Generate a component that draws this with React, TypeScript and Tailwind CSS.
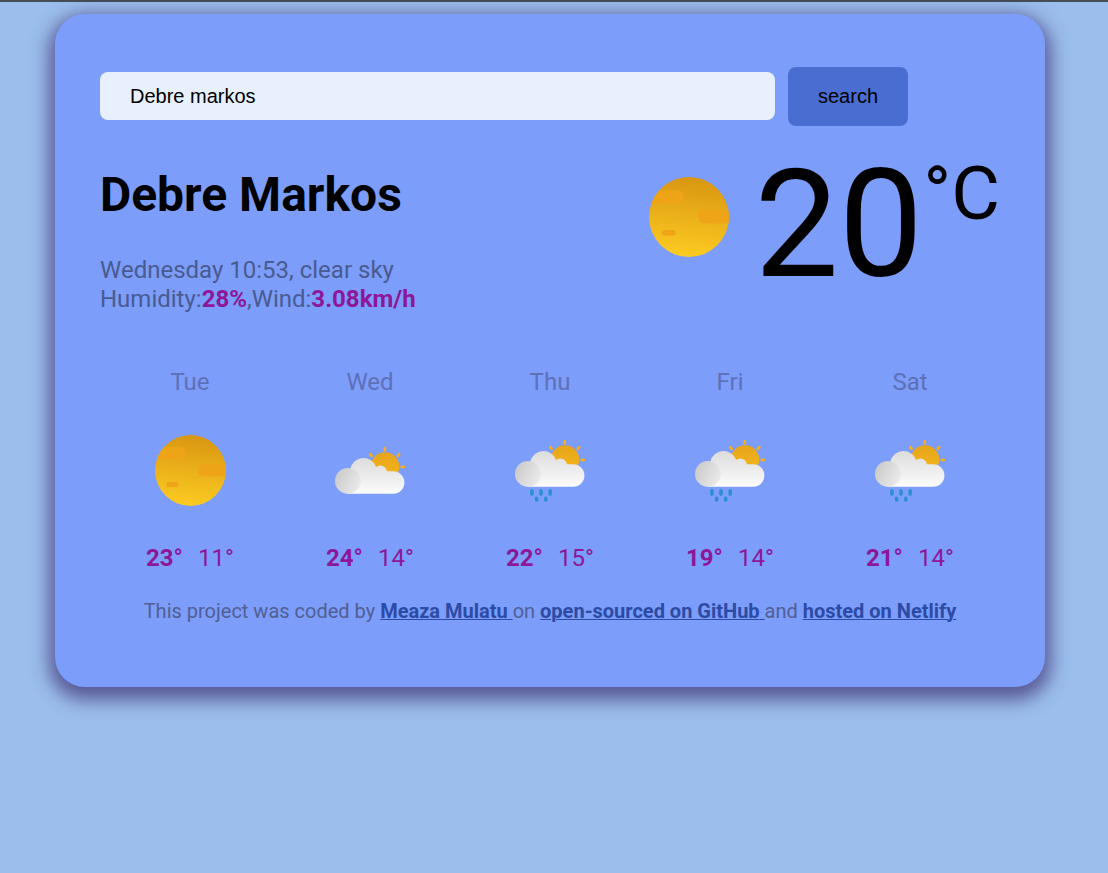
import { useState } from "react";

type Kind = "sun" | "cloud" | "rain";

function SunIcon({ className }: { className: string }) {
  return (
    <svg viewBox="0 0 80 80" className={className} role="img" aria-label="clear sky">
      <defs>
        <linearGradient id="disc" x1="0.55" y1="0" x2="0.45" y2="1">
          <stop offset="0" stopColor="#d89611" />
          <stop offset="1" stopColor="#fdcb22" />
        </linearGradient>
        <clipPath id="discClip">
          <circle cx="40" cy="40" r="40" />
        </clipPath>
      </defs>
      <circle cx="40" cy="40" r="40" fill="url(#disc)" />
      <g clipPath="url(#discClip)" fill="#efa317">
        <rect x="-10" y="13.500" width="44.500" height="13.500" rx="6" />
        <rect x="49" y="33" width="45" height="13.500" rx="6" />
        <rect x="13" y="53" width="13.500" height="5.500" rx="2.500" />
      </g>
    </svg>
  );
}

function CloudIcon({ rain }: { rain: boolean }) {
  const dy = rain ? 0 : 7;
  return (
    <svg
      viewBox="0 0 72 72"
      className="size-[72px]"
      role="img"
      aria-label={rain ? "rain" : "few clouds"}
    >
      <defs>
        <linearGradient id="cloudBody" x1="0" y1="0" x2="0" y2="1">
          <stop offset="0" stopColor="#dcdcdc" />
          <stop offset="1" stopColor="#fcfcfc" />
        </linearGradient>
        <linearGradient id="cloudPuff" x1="0" y1="0.2" x2="1" y2="0.7">
          <stop offset="0" stopColor="#c9c9c9" />
          <stop offset="1" stopColor="#ebebeb" />
        </linearGradient>
        <linearGradient id="smallSun" x1="0" y1="0" x2="0" y2="1">
          <stop offset="0" stopColor="#e6a41b" />
          <stop offset="1" stopColor="#f6b91d" />
        </linearGradient>
      </defs>
      <g transform={`translate(0.6 ${dy})`}>
        <g stroke="#f9ae16" strokeWidth="2.700" strokeLinecap="round">
          <path d="M50.200 7.400v2M35.600 13.200l1.400 1.600M64.600 13.200l-1.400 1.600M67.200 25.900h2" />
        </g>
        <circle cx="50.400" cy="25.600" r="14.300" fill="url(#smallSun)" />
        <path
          d="M13.300 52.800A12.800 12.800 0 0 1 15.800 27.800A13.400 13.400 0 0 1 41.600 26A6.500 6.500 0 0 1 52.200 30.300H58.600A11.250 11.250 0 0 1 58.600 52.800Z"
          fill="url(#cloudBody)"
        />
        <circle cx="13.300" cy="39.900" r="12.900" fill="url(#cloudPuff)" />
        {rain && (
          <g stroke="#2b8fd0" strokeWidth="3.600" strokeLinecap="round">
            <path d="M17.300 56.900v3.200M26.400 56.900v3.200M35.600 56.900v3.200M22 64.400v1.500M31.100 64.400v1.500" />
          </g>
        )}
      </g>
    </svg>
  );
}

const forecast: { day: string; icon: Kind; max: number; min: number }[] = [
  { day: "Tue", icon: "sun", max: 23, min: 11 },
  { day: "Wed", icon: "cloud", max: 24, min: 14 },
  { day: "Thu", icon: "rain", max: 22, min: 15 },
  { day: "Fri", icon: "rain", max: 19, min: 14 },
  { day: "Sat", icon: "rain", max: 21, min: 14 },
];

export default function App() {
  const [city, setCity] = useState("Debre markos");

  return (
    <div className="min-h-screen border-t-2 border-[#474c55] bg-[#9bbeed] pt-3 pr-[63px] pb-12 pl-[55px] font-['Roboto',sans-serif]">
      <main className="rounded-[30px] bg-[#7c9dfa] px-[45px] pt-[53px] pb-16 shadow-[0_7px_18px_6px_rgba(67,56,122,0.75)]">
        <form
          className="flex items-start gap-[13px] font-['Liberation_Sans',Arial,sans-serif] text-xl text-black"
          onSubmit={(e) => e.preventDefault()}
        >
          <input
            type="search"
            aria-label="City"
            value={city}
            onChange={(e) => setCity(e.target.value)}
            className="mt-[5px] h-12 w-3/4 appearance-none rounded-lg bg-[#e8f0fe] px-[30px] outline-none"
          />
          <button type="submit" className="h-[59px] rounded-lg bg-[#4a6dd1] px-[30px] pb-px">
            search
          </button>
        </form>

        <section className="mt-[41px] flex justify-between">
          <div>
            <h1 className="text-[48px] leading-[56px] font-bold text-black">Debre Markos</h1>
            <p className="mt-[33px] text-[24px] leading-[29px] text-[#495b90]">
              Wednesday 10:53, clear sky
              <br />
              Humidity:<strong className="font-bold text-[#8c1799]">28%</strong>,Wind:
              <strong className="font-bold text-[#8c1799]">3.08km/h</strong>
            </p>
          </div>
          <div className="flex items-start text-black">
            <SunIcon className="mt-[10px] mr-[26px] size-20" />
            <span className="text-[150px] leading-[116px]">20</span>
            <span className="text-[75px] leading-[52px]">°C</span>
          </div>
        </section>

        <section className="mt-[54px] grid grid-cols-5 text-center text-[24px] leading-[28px]">
          {forecast.map((f) => (
            <div key={f.day} className="flex flex-col items-center">
              <div className="text-[#5e70b8]">{f.day}</div>
              <div className="my-[38px] flex size-[72px] items-center justify-center">
                {f.icon === "sun" ? (
                  <SunIcon className="size-[71px]" />
                ) : (
                  <CloudIcon rain={f.icon === "rain"} />
                )}
              </div>
              <div className="flex gap-[15px] text-[#8c1799]">
                <strong className="font-bold">{f.max}°</strong>
                <span>{f.min}°</span>
              </div>
            </div>
          ))}
        </section>

        <footer className="mt-[27px] text-center text-[20px] leading-[24px] text-[#515f94]">
          This project was coded by{" "}
          <a href="#author" className="font-bold text-[#2c4ba5] underline decoration-1">
            Meaza Mulatu{" "}
          </a>
          on{" "}
          <a href="#source" className="font-bold text-[#2c4ba5] underline decoration-1">
            open-sourced on GitHub{" "}
          </a>
          and{" "}
          <a href="#host" className="font-bold text-[#2c4ba5] underline decoration-1">
            hosted on Netlify
          </a>
        </footer>
      </main>
    </div>
  );
}
